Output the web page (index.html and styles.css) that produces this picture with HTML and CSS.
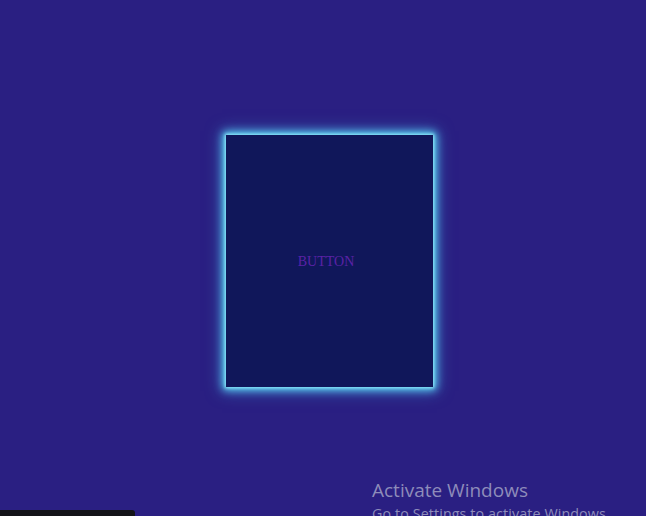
FILE: index.html
```html
<!DOCTYPE html>
<html>
<head>
<meta charset="utf-8">
<link rel="stylesheet" href="styles.css">
</head>
<body>
<main class="stage">
  <button class="glow-btn">BUTTON</button>
</main>
<div class="taskbar-edge"></div>
<div class="watermark">
  <div class="wm-title">Activate Windows</div>
  <div class="wm-sub">Go to Settings to activate Windows.</div>
</div>
</body>
</html>
```
FILE: styles.css
```css
html, body {
  margin: 0;
  padding: 0;
  height: 100%;
  overflow: hidden;
}
body {
  background: #2a1f82;
  position: relative;
}
.stage {
  display: flex;
  justify-content: flex-start;
  padding: 135px 0 0 226px;
}
.glow-btn {
  width: 207px;
  height: 252px;
  box-sizing: border-box;
  background: #10175a;
  border: none;
  border-radius: 0;
  color: #5a22a6;
  font-family: "Liberation Serif", serif;
  font-size: 14px;
  box-shadow: 0 0 3px 1px #8fe9fa, 0 0 8px 3px #5ad0f2, 0 0 15px 4px rgba(70, 170, 230, 0.6);
  padding: 1px 7px 0 0;
  cursor: pointer;
}
.taskbar-edge {
  position: absolute;
  left: 0;
  bottom: 0;
  width: 135px;
  height: 6px;
  background: #141418;
  border-top-right-radius: 3px;
}
.watermark {
  position: absolute;
  left: 372px;
  top: 478px;
  color: #8e8cba;
  font-family: "Open Sans", "Noto Sans", sans-serif;
  pointer-events: none;
}
.wm-title {
  font-size: 19px;
  line-height: 24px;
}
.wm-sub {
  font-size: 14.3px;
  letter-spacing: 0.1px;
  line-height: 20px;
  margin-top: 2px;
}
```
